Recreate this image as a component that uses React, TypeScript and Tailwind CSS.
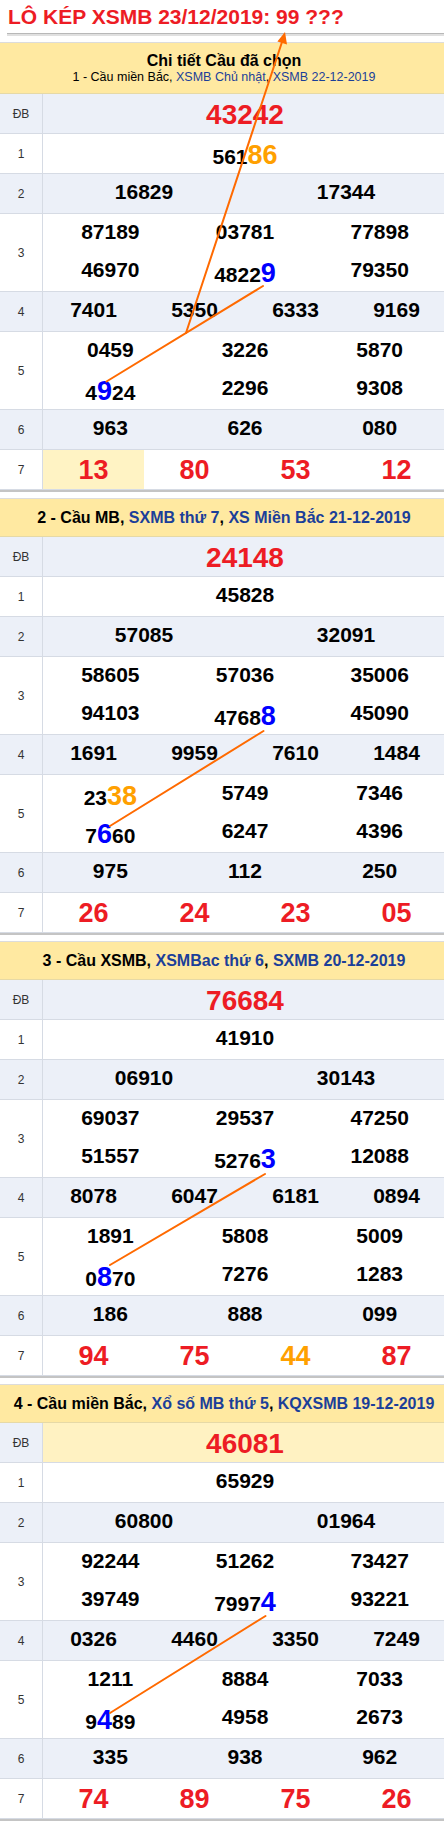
import clsx from 'clsx'

type Row = {
  l: string
  db?: string
  dbMark?: boolean
  c?: string[][]
  g7?: string[]
  mark?: number
}

type Section = {
  head: React.ReactNode
  tall?: boolean
  rows: Row[]
}

// [x] = chữ số xanh, {x} = chữ số cam
function parse(s: string) {
  const parts: { t: string; c: '' | 'b' | 'o' }[] = []
  const re = /\[([^\]]+)\]|\{([^}]+)\}|([^[{]+)/g
  let m: RegExpExecArray | null
  while ((m = re.exec(s))) {
    if (m[1]) parts.push({ t: m[1], c: 'b' })
    else if (m[2]) parts.push({ t: m[2], c: 'o' })
    else parts.push({ t: m[3], c: '' })
  }
  return parts
}

const Blue = ({ children }: { children: React.ReactNode }) => (
  <span className="text-[#1b3f99]">{children}</span>
)

const SECTIONS: Section[] = [
  {
    tall: true,
    head: (
      <>
        <div className="text-[16px] font-bold leading-[18px] text-black">Chi tiết Cầu đã chọn</div>
        <div className="text-[12.5px] leading-[15px] text-black">
          1 - Cầu miền Bắc, <Blue>XSMB Chủ nhật</Blue>, <Blue>XSMB 22-12-2019</Blue>
        </div>
      </>
    ),
    rows: [
      { l: 'ĐB', db: '43242' },
      { l: '1', c: [['561{86}']] },
      { l: '2', c: [['16829'], ['17344']] },
      { l: '3', c: [['87189', '46970'], ['03781', '4822[9]'], ['77898', '79350']] },
      { l: '4', c: [['7401'], ['5350'], ['6333'], ['9169']] },
      { l: '5', c: [['0459', '4[9]24'], ['3226', '2296'], ['5870', '9308']] },
      { l: '6', c: [['963'], ['626'], ['080']] },
      { l: '7', g7: ['13', '80', '53', '12'], mark: 0 },
    ],
  },
  {
    head: (
      <>
        2 - Cầu MB, <Blue>SXMB thứ 7</Blue>, <Blue>XS Miền Bắc 21-12-2019</Blue>
      </>
    ),
    rows: [
      { l: 'ĐB', db: '24148' },
      { l: '1', c: [['45828']] },
      { l: '2', c: [['57085'], ['32091']] },
      { l: '3', c: [['58605', '94103'], ['57036', '4768[8]'], ['35006', '45090']] },
      { l: '4', c: [['1691'], ['9959'], ['7610'], ['1484']] },
      { l: '5', c: [['23{38}', '7[6]60'], ['5749', '6247'], ['7346', '4396']] },
      { l: '6', c: [['975'], ['112'], ['250']] },
      { l: '7', g7: ['26', '24', '23', '05'] },
    ],
  },
  {
    head: (
      <>
        3 - Cầu XSMB, <Blue>XSMBac thứ 6</Blue>, <Blue>SXMB 20-12-2019</Blue>
      </>
    ),
    rows: [
      { l: 'ĐB', db: '76684' },
      { l: '1', c: [['41910']] },
      { l: '2', c: [['06910'], ['30143']] },
      { l: '3', c: [['69037', '51557'], ['29537', '5276[3]'], ['47250', '12088']] },
      { l: '4', c: [['8078'], ['6047'], ['6181'], ['0894']] },
      { l: '5', c: [['1891', '0[8]70'], ['5808', '7276'], ['5009', '1283']] },
      { l: '6', c: [['186'], ['888'], ['099']] },
      { l: '7', g7: ['94', '75', '{44}', '87'] },
    ],
  },
  {
    head: (
      <>
        4 - Cầu miền Bắc, <Blue>Xổ số MB thứ 5</Blue>, <Blue>KQXSMB 19-12-2019</Blue>
      </>
    ),
    rows: [
      { l: 'ĐB', db: '46081', dbMark: true },
      { l: '1', c: [['65929']] },
      { l: '2', c: [['60800'], ['01964']] },
      { l: '3', c: [['92244', '39749'], ['51262', '7997[4]'], ['73427', '93221']] },
      { l: '4', c: [['0326'], ['4460'], ['3350'], ['7249']] },
      { l: '5', c: [['1211', '9[4]89'], ['8884', '4958'], ['7033', '2673']] },
      { l: '6', c: [['335'], ['938'], ['962']] },
      { l: '7', g7: ['74', '89', '75', '26'] },
    ],
  },
]

function NumLine({ s, two }: { s: string; two: boolean }) {
  return (
    <div className={clsx('whitespace-nowrap text-center text-[21px] font-bold leading-[36px] text-black', two && 'h-[38px]')}>
      {parse(s).map((p, i) =>
        p.c === 'b' ? (
          <span key={i} className="text-[27px] leading-[43px] text-[#0000ff]">{p.t}</span>
        ) : p.c === 'o' ? (
          <span key={i} className="text-[27px] leading-[43px] text-[#ffa000]">{p.t}</span>
        ) : (
          <span key={i}>{p.t}</span>
        )
      )}
    </div>
  )
}

function PrizeRow({ row, alt }: { row: Row; alt: boolean }) {
  const two = !!row.c?.some(col => col.length > 1)
  return (
    <div className={clsx('flex border-b border-[#d6dbe4]', two ? 'h-[78px]' : 'h-[40px]', alt ? 'bg-[#ecf0f8]' : 'bg-white')}>
      <div className="flex w-[43px] shrink-0 items-center justify-center border-r border-[#d6dbe4] text-[12px] text-[#333]">
        {row.l}
      </div>
      <div className="flex w-[404px] shrink-0">
        {row.db && (
          <div className={clsx('flex-1 text-center text-[28px] font-bold leading-[42px] text-[#ed1c24]', row.dbMark && 'bg-[#fff2c2]')}>
            {row.db}
          </div>
        )}
        {row.c?.map((col, i) => (
          <div key={i} className="flex-1 basis-0">
            {col.map((s, j) => (
              <NumLine key={j} s={s} two={two} />
            ))}
          </div>
        ))}
        {row.g7?.map((s, i) => {
          const orange = s.startsWith('{')
          return (
            <div
              key={i}
              className={clsx(
                'flex-1 basis-0 text-center text-[27px] font-bold leading-[41px]',
                orange ? 'text-[#ffa000]' : 'text-[#ed1c24]',
                row.mark === i && 'bg-[#fff3c4]'
              )}
            >
              {s.replace(/[{}]/g, '')}
            </div>
          )
        })}
      </div>
    </div>
  )
}

function CauTable({ sec }: { sec: Section }) {
  return (
    <div className="mb-[6px] w-[448px] border-t border-b-2 border-t-[#dcdcdc] border-b-[#c4c4c4]">
      {sec.tall ? (
        <div className="h-[51px] border-b border-[#e6d9a6] bg-[#ffe9a1] pt-[9px] text-center">{sec.head}</div>
      ) : (
        <div className="h-[38px] border-b border-[#e6d9a6] bg-[#ffe9a1] text-center text-[16px] font-bold leading-[37px] text-black whitespace-nowrap">
          {sec.head}
        </div>
      )}
      {sec.rows.map((r, i) => (
        <PrizeRow key={i} row={r} alt={i % 2 === 0} />
      ))}
    </div>
  )
}

export default function App() {
  return (
    <div className="relative w-[444px] overflow-hidden bg-white font-['Liberation_Sans',Arial,sans-serif]">
      {/* tiêu đề */}
      <div className="pl-[8px] pt-[3px] text-[21px] font-bold leading-[28px] text-[#ed1c24] whitespace-nowrap">
        LÔ KÉP XSMB 23/12/2019: 99 ???
      </div>
      <div className="ml-[7px] mt-[2px] h-[1px] bg-[#b8b8b8]" />
      <div className="ml-[7px] h-[2px] bg-[#e0e0e0]" />
      <div className="mt-[6px]">
        {SECTIONS.map((s, i) => (
          <CauTable key={i} sec={s} />
        ))}
      </div>

      {/* đường nối cầu */}
      <svg className="pointer-events-none absolute left-0 top-0" width="444" height="1823" viewBox="0 0 444 1823">
        <g stroke="#ff6a00" strokeWidth="2" strokeLinecap="round" fill="none">
          <line x1="106.5" y1="381.5" x2="263" y2="286" />
          <line x1="186" y1="333" x2="282" y2="42" />
          <line x1="110" y1="826" x2="263.5" y2="731" />
          <line x1="110" y1="1265" x2="265" y2="1174" />
          <line x1="110" y1="1713" x2="265.5" y2="1616" />
        </g>
        <polygon points="285,32 277.4,41.6 287,44.4" fill="#ff6a00" />
      </svg>
    </div>
  )
}
